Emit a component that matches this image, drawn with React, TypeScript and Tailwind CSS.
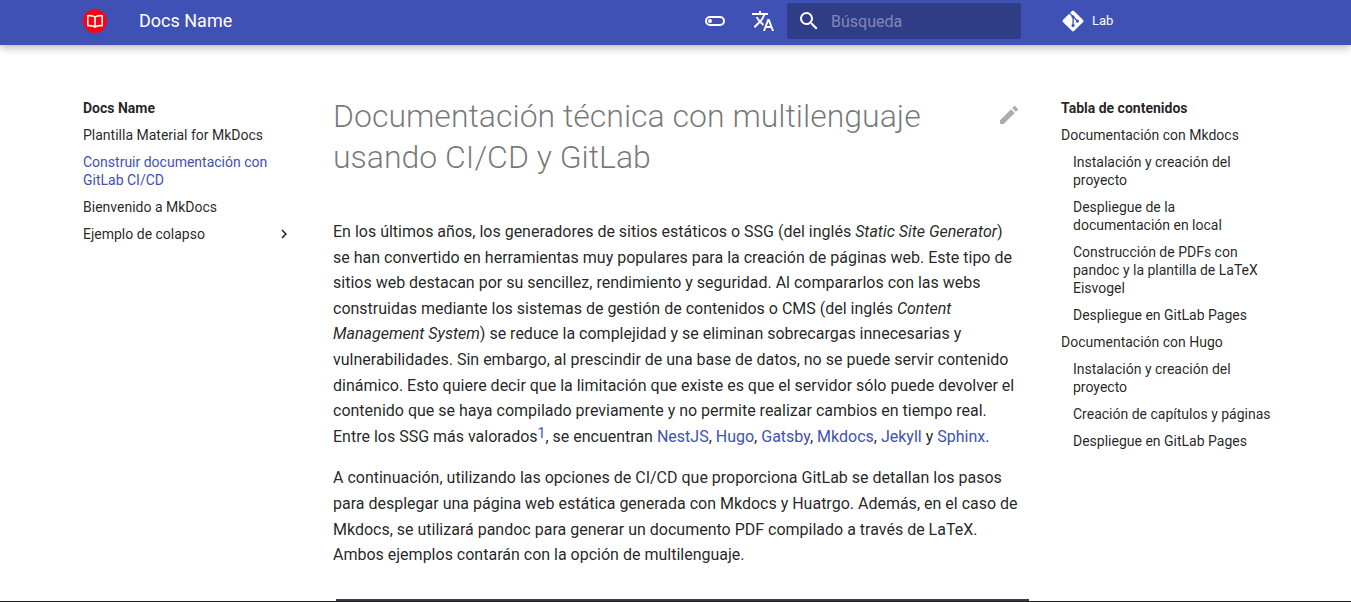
import React from "react";
import { MdTranslate } from "react-icons/md";
import { FaGitAlt } from "react-icons/fa";

type Entry = { text: string; children?: string[] };

const pages = [
  { text: "Plantilla Material for MkDocs", active: false },
  { text: "Construir documentación con GitLab CI/CD", active: true },
  { text: "Bienvenido a MkDocs", active: false },
];

const toc: Entry[] = [
  {
    text: "Documentación con Mkdocs",
    children: [
      "Instalación y creación del proyecto",
      "Despliegue de la documentación en local",
      "Construcción de PDFs con pandoc y la plantilla de LaTeX Eisvogel",
      "Despliegue en GitLab Pages",
    ],
  },
  {
    text: "Documentación con Hugo",
    children: [
      "Instalación y creación del proyecto",
      "Creación de capítulos y páginas",
      "Despliegue en GitLab Pages",
    ],
  },
];

function Icon({ d, className }: { d: string; className: string }) {
  return (
    <svg viewBox="0 0 24 24" fill="currentColor" className={className} aria-hidden="true">
      <path d={d} />
    </svg>
  );
}

const TOGGLE =
  "M7 10a2 2 0 0 1 2 2 2 2 0 0 1-2 2 2 2 0 0 1-2-2 2 2 0 0 1 2-2m10-3a5 5 0 0 1 5 5 5 5 0 0 1-5 5H7a5 5 0 0 1-5-5 5 5 0 0 1 5-5h10M7 9a3 3 0 0 0-3 3 3 3 0 0 0 3 3h10a3 3 0 0 0 3-3 3 3 0 0 0-3-3H7z";
const SEARCH =
  "M9.5 3A6.5 6.5 0 0 1 16 9.5c0 1.61-.59 3.09-1.56 4.23l.27.27h.79l5 5-1.5 1.5-5-5v-.79l-.27-.27A6.516 6.516 0 0 1 9.5 16 6.5 6.5 0 0 1 3 9.5 6.5 6.5 0 0 1 9.5 3m0 2C7 5 5 7 5 9.5S7 14 9.5 14 14 12 14 9.5 12 5 9.5 5z";
const PENCIL =
  "M20.71 7.04c.39-.39.39-1.04 0-1.41l-2.34-2.34c-.37-.39-1.02-.39-1.41 0l-1.84 1.83 3.75 3.75M3 17.25V21h3.75L17.81 9.93l-3.75-3.75L3 17.25z";
const CHEVRON = "M8.59 16.58 13.17 12 8.59 7.41 10 6l6 6-6 6-1.41-1.42z";

function Logo() {
  return (
    <svg viewBox="0 0 24 24" className="size-6" aria-hidden="true">
      <circle cx="12" cy="12" r="12" fill="#ff0010" />
      <path
        d="M12 8C10.400 6.700 7.600 6.400 4.800 6.700v10c2.700-.3 5.600.1 7.200 1.500 1.600-1.400 4.500-1.800 7.200-1.500v-10C16.400 6.400 13.600 6.700 12 8zM12 8v10"
        fill="none"
        stroke="#fff"
        strokeWidth="1.600"
        strokeLinejoin="round"
      />
    </svg>
  );
}

function Header() {
  return (
    <header className="bg-[#4051b5] pl-[3px] text-white shadow-[0_0_4px_rgba(0,0,0,0.1),0_4px_8px_rgba(0,0,0,0.2)]">
      <div className="mx-auto flex max-w-[1220px] items-center pt-[3px] pr-1 pb-1.5 pl-4">
        <a href="#" aria-label="Docs Name">
          <Logo />
        </a>
        <span className="ml-8 grow text-lg leading-9">Docs Name</span>
        <button type="button" aria-label="Cambiar a modo oscuro" className="mr-6">
          <Icon d={TOGGLE} className="size-6" />
        </button>
        <button type="button" aria-label="Seleccionar idioma" className="mr-3">
          <MdTranslate className="size-6" />
        </button>
        <label className="flex h-9 w-[234px] items-center rounded-xs bg-black/26 pl-2.5">
          <Icon d={SEARCH} className="size-6 shrink-0" />
          <input
            type="search"
            aria-label="Búsqueda"
            placeholder="Búsqueda"
            className="ml-2.5 h-9 w-full min-w-0 bg-transparent text-base outline-none placeholder:text-white/40"
          />
        </label>
        <a href="#" className="ml-7 flex w-[234px] items-center pl-3">
          <FaGitAlt className="size-6" />
          <span className="ml-[7px] text-[13px] leading-9">Lab</span>
        </a>
      </div>
    </header>
  );
}

function SiteNav() {
  return (
    <nav aria-label="Docs Name" className="w-[242px] shrink-0 pt-[54px] pr-4 pl-4 text-sm leading-[18px]">
      <p className="font-bold">Docs Name</p>
      <ul>
        {pages.map((page) => (
          <li key={page.text} className="mt-[9px] pr-3">
            <a href="#" className={page.active ? "block text-[#4051b5]" : "block"}>
              {page.text}
            </a>
          </li>
        ))}
        <li className="mt-[9px]">
          <button type="button" className="flex w-full items-center justify-between text-left">
            Ejemplo de colapso
            <Icon d={CHEVRON} className="size-[18px]" />
          </button>
        </li>
      </ul>
    </nav>
  );
}

function Toc() {
  return (
    <nav aria-label="Tabla de contenidos" className="w-[242px] shrink-0 pt-[54px] pr-4 pl-4 text-sm leading-[18px]">
      <p className="font-bold">Tabla de contenidos</p>
      <ul>
        {toc.map((entry) => (
          <li key={entry.text} className="mt-[9px]">
            <a href="#" className="block">
              {entry.text}
            </a>
            <ul className="pl-3">
              {entry.children?.map((child) => (
                <li key={child} className="mt-[9px]">
                  <a href="#" className="block">
                    {child}
                  </a>
                </li>
              ))}
            </ul>
          </li>
        ))}
      </ul>
    </nav>
  );
}

function Link({ children }: { children: React.ReactNode }) {
  return (
    <a href="#" className="text-[#4051b5]">
      {children}
    </a>
  );
}

function Article() {
  return (
    <main className="min-w-0 grow px-6 pt-[51px]">
      <div className="mb-[41px] flex items-start justify-between">
        <h1 className="text-[32px] leading-[41px] font-light text-black/54">
          Documentación técnica con multilenguaje usando CI/CD y GitLab
        </h1>
        <a href="#" aria-label="Editar esta página" className="mt-[7px] ml-6 text-black/32">
          <Icon d={PENCIL} className="size-6" />
        </a>
      </div>
      <p className="mb-4">
        En los últimos años, los generadores de sitios estáticos o SSG (del inglés <em>Static Site Generator</em>) se
        han convertido en herramientas muy populares para la creación de páginas web. Este tipo de sitios web destacan
        por su sencillez, rendimiento y seguridad. Al compararlos con las webs construidas mediante los sistemas de
        gestión de contenidos o CMS (del inglés <em>Content Management System</em>) se reduce la complejidad y se
        eliminan sobrecargas innecesarias y vulnerabilidades. Sin embargo, al prescindir de una base de datos, no se
        puede servir contenido dinámico. Esto quiere decir que la limitación que existe es que el servidor sólo puede
        devolver el contenido que se haya compilado previamente y no permite realizar cambios en tiempo real. Entre los
        SSG más valorados
        <sup className="-top-1 text-sm leading-none">
          <Link>1</Link>
        </sup>
        , se encuentran <Link>NestJS</Link>, <Link>Hugo</Link>, <Link>Gatsby</Link>, <Link>Mkdocs</Link>,{" "}
        <Link>Jekyll</Link> y <Link>Sphinx</Link>.
      </p>
      <p>
        A continuación, utilizando las opciones de CI/CD que proporciona GitLab se detallan los pasos para desplegar una
        página web estática generada con Mkdocs y Huatrgo. Además, en el caso de Mkdocs, se utilizará pandoc para
        generar un documento PDF compilado a través de LaTeX. Ambos ejemplos contarán con la opción de multilenguaje.
      </p>
    </main>
  );
}

export default function App() {
  return (
    <div className="flex min-h-screen flex-col bg-white font-[Roboto,sans-serif] text-base leading-[1.6] text-black/87">
      <Header />
      <div className="pl-[3px]">
        <div className="mx-auto flex max-w-[1220px]">
          <SiteNav />
          <Article />
          <Toc />
        </div>
      </div>
      <footer className="mt-auto border-b border-[#1c1c20] pl-[3px]">
        <div className="mx-auto max-w-[1220px] pr-[258px] pl-[269px]">
          <div className="h-0.5 bg-[#3a3a43]" />
        </div>
      </footer>
    </div>
  );
}
